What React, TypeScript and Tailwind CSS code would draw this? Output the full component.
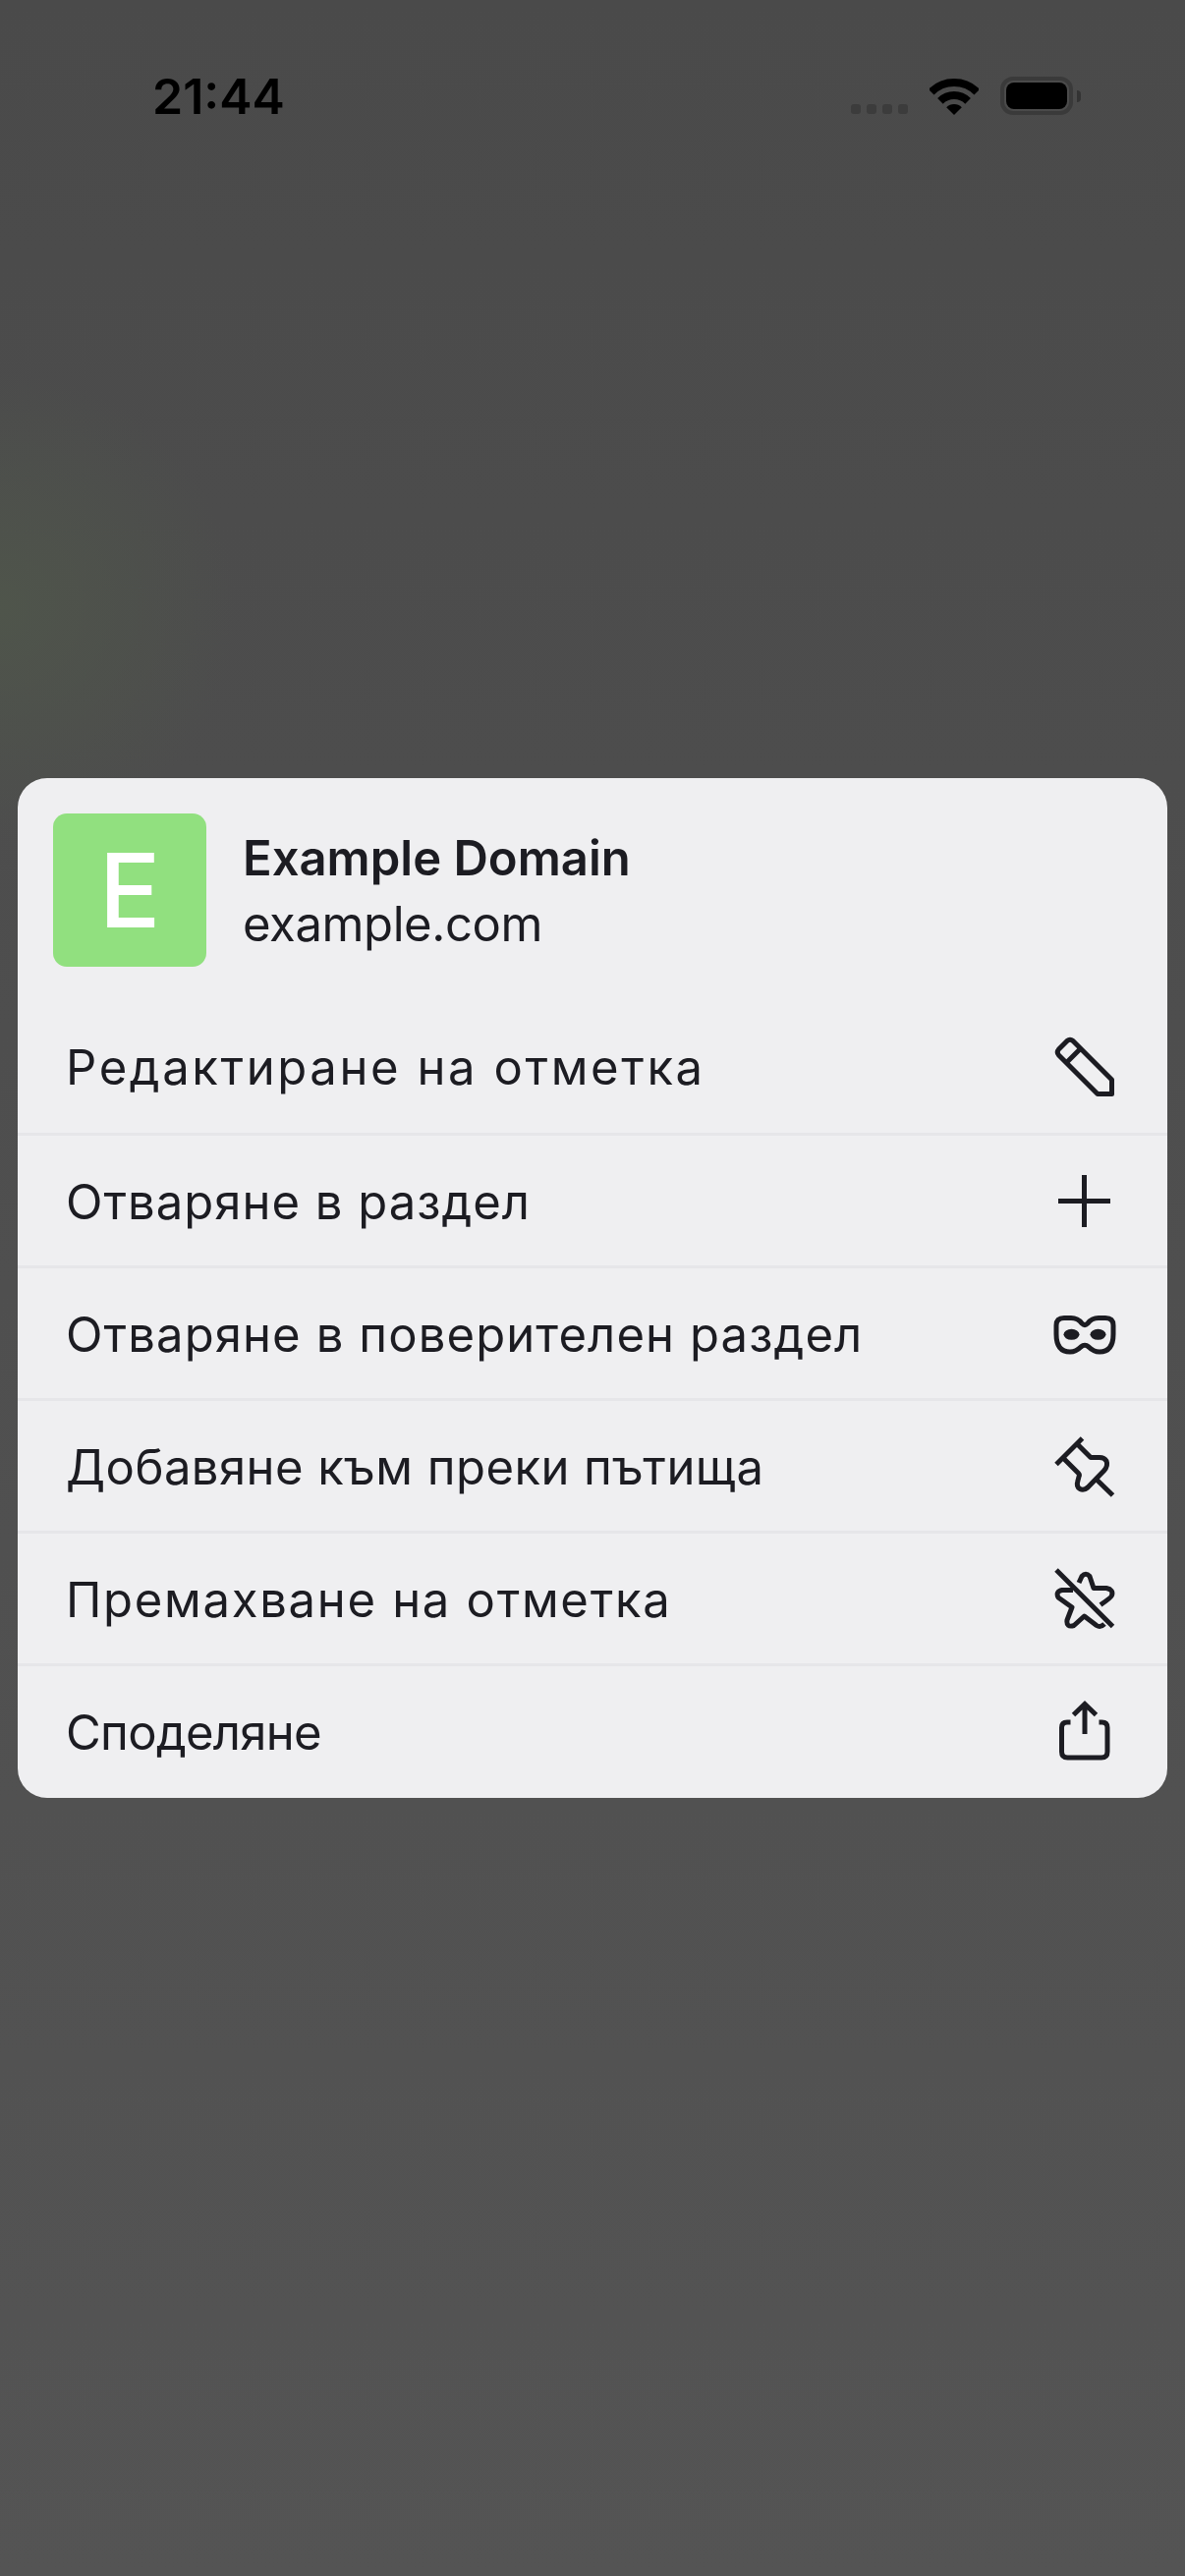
const rows = [
  { label: "Редактиране на отметка", tracking: "tracking-[2.6px]", icon: <PencilIcon /> },
  { label: "Отваряне в раздел", tracking: "tracking-[1px]", icon: <PlusIcon /> },
  { label: "Отваряне в поверителен раздел", tracking: "tracking-[1.1px]", icon: <MaskIcon /> },
  { label: "Добавяне към преки пътища", tracking: "tracking-[0.45px]", icon: <PinIcon /> },
  { label: "Премахване на отметка", tracking: "tracking-[1.7px]", icon: <StarOffIcon /> },
  { label: "Споделяне", tracking: "tracking-[-0.7px]", icon: <ShareIcon /> },
];

function Icon({ children }: { children: React.ReactNode }) {
  return (
    <svg viewBox="0 0 64 64" className="h-16 w-16" fill="none" stroke="#1c1c22" strokeWidth="5">
      {children}
    </svg>
  );
}

function PencilIcon() {
  return (
    <Icon>
      <path d="M5.5 14 L14 5.5 Q17 3 20 5.5 L59.5 45 V59.5 H45 L5.5 20 Q3 17 5.5 14 Z" strokeLinejoin="round" />
      <path d="M13.5 27.5 L27.5 13.5" />
    </Icon>
  );
}

function PlusIcon() {
  return (
    <Icon>
      <path d="M31.5 6 V59 M5 32.5 H58" />
    </Icon>
  );
}

function MaskIcon() {
  return (
    <Icon>
      <path
        d="M3 24 Q3 16.5 11 16.5 H18 Q25 16.5 29 22 Q32 25 35 22 Q39 16.5 46 16.5 H53 Q61 16.5 61 24 V33 Q61 51 47 51 Q41 51 36 46 Q32 42.5 28 46 Q23 51 17 51 Q3 51 3 33 Z"
        strokeLinejoin="round"
      />
      <ellipse cx="18.5" cy="33.3" rx="8" ry="5.5" fill="#1c1c22" stroke="none" />
      <ellipse cx="45.5" cy="33.3" rx="8" ry="5.5" fill="#1c1c22" stroke="none" />
    </Icon>
  );
}

function PinIcon() {
  return (
    <Icon>
      <path d="M3 30.5 L29.5 4" />
      <path
        d="M11 25 L25.5 39.5 Q27 41 26 43 L25 47 Q23 53 27 55.5 Q31 57.5 35 54 L51.5 37 Q56 32 54 27 Q52 23.5 47 23.5 H38 L24.5 10"
        strokeLinejoin="round"
      />
      <path d="M43 45 L60.5 62" />
    </Icon>
  );
}

function StarOffIcon() {
  return (
    <Icon>
      <path d="M26 16 L29 9.5 Q33 5 37 9.5 L41 21.5 H54 Q61.5 23 59.5 29 Q59 31 48 38.5" strokeLinejoin="round" />
      <path d="M20 23.5 H9 Q2 25 5 31 L19 41 L14 54 Q13 62 21 59.5 L31.5 50 L44 59.5 Q48 62 52 58" strokeLinejoin="round" />
      <path d="M3 3 L60.5 60.5" />
    </Icon>
  );
}

function ShareIcon() {
  return (
    <Icon>
      <path d="M32 35 V5 M20.5 15.5 L32 4.5 L43.5 15.5" />
      <path d="M17.5 23 H14 Q8.5 23 8.5 28.5 V53 Q8.5 59 14.5 59 H49 Q55 59 55 53 V28.5 Q55 23 49.5 23 H46.5" />
    </Icon>
  );
}

export default function App() {
  return (
    <div
      lang="bg"
      className="flex h-[2622px] w-[1206px] flex-col overflow-hidden bg-[radial-gradient(circle_at_0px_620px,#4f554b_0,transparent_240px),linear-gradient(to_bottom,#4a4a4a,#545454)] font-['Inter','Noto_Sans',sans-serif]"
    >
      <div className="flex h-[792px] shrink-0 items-start justify-between pl-[155px] pr-[106px] pt-[68px]">
        <span className="text-[50px] leading-[60px] font-semibold text-black">21:44</span>
        <div className="flex items-end gap-[22px] pt-[10px]">
          <div className="flex gap-[6px] pb-[1px]">
            <span className="h-[10px] w-[10px] rounded-[3px] bg-[#3c3c3c]" />
            <span className="h-[10px] w-[10px] rounded-[3px] bg-[#3c3c3c]" />
            <span className="h-[10px] w-[10px] rounded-[3px] bg-[#3c3c3c]" />
            <span className="h-[10px] w-[10px] rounded-[3px] bg-[#3c3c3c]" />
          </div>
          <svg viewBox="0 0 50 37" className="h-[37px] w-[50px]" fill="none" stroke="#000" strokeWidth="8">
            <path d="M1.7 13.7 A33 33 0 0 1 48.3 13.7" />
            <path d="M10.9 22.9 A20 20 0 0 1 39.1 22.9" />
            <path d="M25 37 L17.2 29.2 A11 11 0 0 1 32.8 29.2 Z" fill="#000" stroke="none" />
          </svg>
          <div className="flex items-center">
            <div className="h-[39px] w-[74px] rounded-[13px] border-[4px] border-[#3a3a3a] p-[2px]">
              <div className="h-full w-full rounded-[8px] bg-black" />
            </div>
            <div className="ml-[4px] h-[12px] w-[4px] rounded-r-full bg-[#333333]" />
          </div>
        </div>
      </div>

      <div className="mx-[18px] h-[1038px] shrink-0 overflow-hidden rounded-[30px] bg-[#efeff1] text-[#1c1c22]">
        <div className="flex h-[226px] items-start gap-[37px] pl-[36px] pt-[36px]">
          <div className="flex h-[156px] w-[156px] items-center justify-center rounded-[14px] bg-[#91e07f] text-[104px] leading-none font-medium text-white">
            E
          </div>
          <div className="pt-[12px]">
            <div className="text-[49px] leading-[67px] font-semibold">Example Domain</div>
            <div className="text-[49px] leading-[67px] tracking-[-0.4px]">example.com</div>
          </div>
        </div>
        {rows.map((row, i) => (
          <div
            key={row.label}
            className={
              i === 0
                ? "flex h-[135px] items-center justify-between pl-[49px] pr-[52px]"
                : "flex h-[135px] items-center justify-between border-t-[3px] border-[#e6e6e9] pl-[49px] pr-[52px]"
            }
          >
            <span className={"pt-[3px] text-[49px] leading-[60px] " + row.tracking}>{row.label}</span>
            {row.icon}
          </div>
        ))}
      </div>
    </div>
  );
}
